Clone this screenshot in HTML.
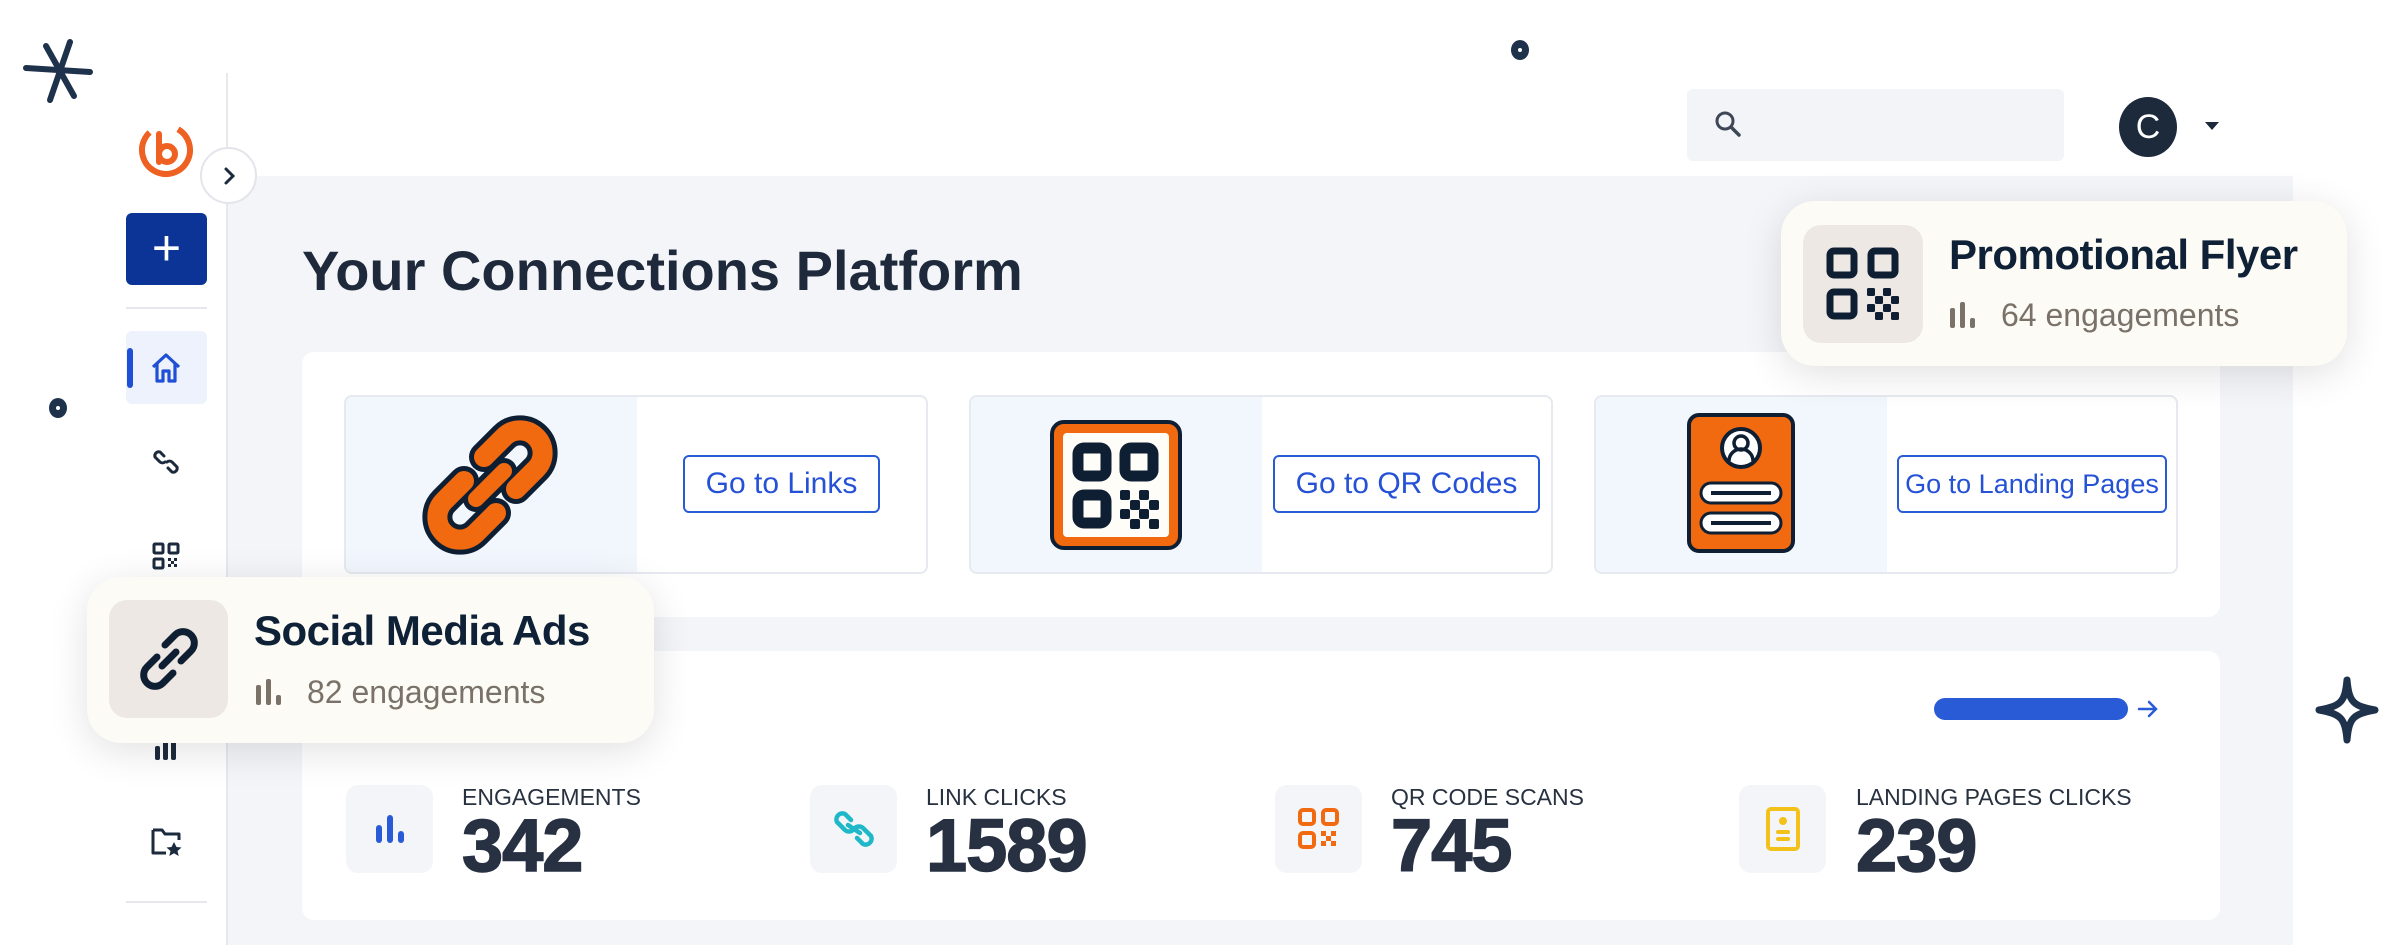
<!DOCTYPE html>
<html><head><meta charset="utf-8"><style>
*{margin:0;padding:0;box-sizing:border-box}
body{width:2401px;height:945px;overflow:hidden;background:#fff;font-family:"Liberation Sans",sans-serif;position:relative;color:#1b2a3d}
.abs{position:absolute}
.panel{left:227px;top:176px;width:2066px;height:769px;background:#f4f5f8}
.card{background:#fff;border-radius:12px}
.ic{border:2px solid #e6e9ef;border-radius:8px;background:#fff;overflow:hidden}
.ic .l{position:absolute;left:0;top:0;bottom:0;width:291px;background:#f2f7fe}
.btn{border:2px solid #2a5bd7;border-radius:6px;color:#2451d6;font-size:30px;display:flex;align-items:center;justify-content:center;height:58px;background:#fff}
.sbox{width:87px;height:88px;border-radius:12px;background:#f4f5f8;display:flex;align-items:center;justify-content:center}
.lab{font-size:23px;color:#27313f}
.num{font-size:74px;font-weight:bold;color:#273142;letter-spacing:-1px;-webkit-text-stroke:1.5px #273142}
.pop{background:#fcfbf5;border-radius:34px;box-shadow:0 8px 40px rgba(0,0,0,.12)}
.pbox{background:#ede8e3;border-radius:18px;display:flex;align-items:center;justify-content:center}
.pt{font-size:42px;font-weight:bold;color:#0f2137;letter-spacing:-0.5px}
.ps{font-size:32px;color:#7a7268}
</style></head><body>
<div class="abs panel"></div>
<!-- decorations -->
<svg class="abs" style="left:22px;top:36px" width="72" height="70" viewBox="0 0 72 70"><g stroke="#1e324b" stroke-width="6" stroke-linecap="round"><line x1="4" y1="32" x2="68" y2="36"/><line x1="48" y1="6" x2="28" y2="64"/><line x1="24" y1="10" x2="52" y2="60"/></g></svg>
<div class="abs" style="left:49px;top:398px;width:18px;height:20px;border-radius:50%;background:#1e324b"><div style="position:absolute;left:7px;top:8px;width:4px;height:4px;background:#fff;border-radius:50%"></div></div>
<div class="abs" style="left:1511px;top:40px;width:18px;height:20px;border-radius:50%;background:#1e324b"><div style="position:absolute;left:7px;top:8px;width:4px;height:4px;background:#fff;border-radius:50%"></div></div>
<svg class="abs" style="left:2315px;top:676px" width="64" height="68" viewBox="0 0 64 68"><path d="M32 4 C34 26 38 30 60 34 C38 38 34 42 32 64 C30 42 26 38 4 34 C26 30 30 26 32 4Z" fill="none" stroke="#1e324b" stroke-width="7" stroke-linejoin="round"/></svg>

<!-- sidebar -->
<div class="abs" style="left:226px;top:73px;width:2px;height:872px;background:#e6e8ec"></div>
<svg class="abs" style="left:137px;top:120px" width="58" height="58" viewBox="0 0 58 58"><circle cx="29" cy="30" r="24" fill="none" stroke="#ee6123" stroke-width="6" stroke-dasharray="120 40" transform="rotate(-60 29 30)"/><path d="M22 14 L22 42 M22 34 a8 8 0 1 1 16 0 a8 8 0 0 1 -16 0" fill="none" stroke="#ee6123" stroke-width="6" stroke-linecap="round"/></svg>
<div class="abs" style="left:200px;top:147px;width:57px;height:57px;border-radius:50%;background:#fff;border:2px solid #e3e5ea"></div>
<svg class="abs" style="left:216px;top:163px" width="26" height="26" viewBox="0 0 26 26"><path d="M10 6 L17 13 L10 20" fill="none" stroke="#1b2a3d" stroke-width="3" stroke-linecap="round"/></svg>
<div class="abs" style="left:126px;top:213px;width:81px;height:72px;background:#0b3496;border-radius:6px;color:#fff;font-size:50px;line-height:70px;text-align:center">+</div>
<div class="abs" style="left:126px;top:307px;width:81px;height:2px;background:#e6e8ec"></div>
<div class="abs" style="left:126px;top:331px;width:81px;height:73px;background:#edf2fd;border-radius:6px"></div>
<div class="abs" style="left:127px;top:348px;width:6px;height:40px;background:#1f4fd6;border-radius:3px"></div>
<svg class="abs" style="left:148px;top:350px" width="36" height="36" viewBox="0 0 36 36"><path d="M5 17 L18 5 L31 17 M9 14 V31 H15 V21 H21 V31 H27 V14" fill="none" stroke="#1f4fd6" stroke-width="3.2" stroke-linejoin="round"/></svg>
<svg class="abs" style="left:151px;top:447px" width="30" height="30" viewBox="0 0 30 30"><g fill="none" stroke="#1b2a3d" stroke-width="3" stroke-linecap="round"><path d="M13 9 L9 5 a4 4 0 0 0 -5 5 l5 5 a4 4 0 0 0 5 0"/><path d="M17 21 L21 25 a4 4 0 0 0 5 -5 l-5 -5 a4 4 0 0 0 -5 0"/></g></svg>
<svg class="abs" style="left:151px;top:541px" width="30" height="30" viewBox="0 0 30 30"><g fill="none" stroke="#1b2a3d" stroke-width="3"><rect x="3" y="3" width="9" height="9" rx="1"/><rect x="18" y="3" width="9" height="9" rx="1"/><rect x="3" y="18" width="9" height="9" rx="1"/></g><g fill="#1b2a3d"><rect x="17" y="17" width="3" height="3"/><rect x="23" y="17" width="3" height="3"/><rect x="20" y="20" width="3" height="3"/><rect x="17" y="23" width="3" height="3"/><rect x="23" y="23" width="3" height="3"/></g></svg>
<svg class="abs" style="left:153px;top:738px" width="28" height="24" viewBox="0 0 28 24"><g fill="#1b2a3d"><rect x="2" y="8" width="5" height="14" rx="2"/><rect x="10" y="3" width="5" height="19" rx="2"/><rect x="18" y="3" width="5" height="19" rx="2"/></g></svg>
<svg class="abs" style="left:150px;top:826px" width="34" height="32" viewBox="0 0 34 32"><path d="M3 4 H12 L15 8 H29 V14 M16 27 H3 V4" fill="none" stroke="#1b2a3d" stroke-width="3" stroke-linejoin="round"/><path d="M24 16 l2.5 5 5 .5 -4 3.5 1.2 5 -4.7 -2.7 -4.7 2.7 1.2 -5 -4 -3.5 5 -.5z" fill="#1b2a3d"/></svg>
<div class="abs" style="left:126px;top:901px;width:81px;height:2px;background:#e6e8ec"></div>

<!-- header -->
<div class="abs" style="left:1687px;top:89px;width:377px;height:72px;background:#f3f4f7;border-radius:6px"></div>
<svg class="abs" style="left:1712px;top:108px" width="32" height="32" viewBox="0 0 32 32"><circle cx="13" cy="13" r="8" fill="none" stroke="#3d4756" stroke-width="3"/><line x1="19" y1="19" x2="27" y2="27" stroke="#3d4756" stroke-width="3.5" stroke-linecap="round"/></svg>
<div class="abs" style="left:2119px;top:97px;width:58px;height:60px;border-radius:50%;background:#1c2a3c;color:#fff;font-size:34px;text-align:center;line-height:60px">C</div>
<svg class="abs" style="left:2204px;top:120px" width="16" height="12"><path d="M1 2 H15 L8 10Z" fill="#1c2a3c"/></svg>

<div class="abs" style="left:302px;top:238px;font-size:56px;font-weight:bold;color:#1e2a3b;letter-spacing:0px">Your Connections Platform</div>

<div class="abs card" style="left:302px;top:352px;width:1918px;height:265px"></div>
<div class="abs ic" style="left:344px;top:395px;width:584px;height:179px"><div class="l"></div></div>
<div class="abs ic" style="left:969px;top:395px;width:584px;height:179px"><div class="l"></div></div>
<div class="abs ic" style="left:1594px;top:395px;width:584px;height:179px"><div class="l"></div></div>
<svg class="abs" style="left:420px;top:415px" width="140" height="140" viewBox="0 0 140 140"><g fill="none" stroke-linecap="round"><path d="M64 42 L84 22 a22 22 0 0 1 32 32 L96 74" stroke="#0f1f33" stroke-width="30"/><path d="M76 98 L56 118 a22 22 0 0 1 -32 -32 L44 66" stroke="#0f1f33" stroke-width="30"/><path d="M56 84 L84 56" stroke="#0f1f33" stroke-width="26"/><path d="M64 42 L84 22 a22 22 0 0 1 32 32 L96 74" stroke="#f26a10" stroke-width="20"/><path d="M76 98 L56 118 a22 22 0 0 1 -32 -32 L44 66" stroke="#f26a10" stroke-width="20"/><path d="M56 84 L84 56" stroke="#f26a10" stroke-width="16"/></g></svg>
<svg class="abs" style="left:1050px;top:420px" width="132" height="130" viewBox="0 0 132 130"><rect x="2" y="2" width="128" height="126" rx="12" fill="#f26a10" stroke="#0f1f33" stroke-width="4"/><rect x="13" y="13" width="106" height="104" rx="4" fill="#fffdf8"/><g fill="none" stroke="#0f1f33" stroke-width="11"><rect x="28" y="28" width="28" height="28" rx="6"/><rect x="75" y="28" width="28" height="28" rx="6"/><rect x="28" y="75" width="28" height="28" rx="6"/></g><g fill="#0f1f33"><rect x="70" y="70" width="10" height="10" rx="2"/><rect x="89" y="70" width="10" height="10" rx="2"/><rect x="80" y="80" width="10" height="10" rx="2"/><rect x="99" y="80" width="10" height="10" rx="2"/><rect x="70" y="89" width="10" height="10" rx="2"/><rect x="89" y="89" width="10" height="10" rx="2"/><rect x="80" y="99" width="10" height="10" rx="2"/><rect x="99" y="99" width="10" height="10" rx="2"/></g></svg>
<svg class="abs" style="left:1687px;top:413px" width="108" height="140" viewBox="0 0 108 140"><rect x="2" y="2" width="104" height="136" rx="10" fill="#f26a10" stroke="#0f1f33" stroke-width="4"/><circle cx="54" cy="35" r="19" fill="#fff" stroke="#0f1f33" stroke-width="4"/><circle cx="54" cy="30" r="7" fill="none" stroke="#0f1f33" stroke-width="3.5"/><path d="M42 48 a12 12 0 0 1 24 0" fill="none" stroke="#0f1f33" stroke-width="3.5"/><rect x="14" y="70" width="80" height="20" rx="10" fill="#fff" stroke="#0f1f33" stroke-width="3"/><line x1="24" y1="80" x2="84" y2="80" stroke="#0f1f33" stroke-width="4"/><rect x="14" y="100" width="80" height="20" rx="10" fill="#fff" stroke="#0f1f33" stroke-width="3"/><line x1="24" y1="110" x2="84" y2="110" stroke="#0f1f33" stroke-width="4"/></svg>
<div class="abs btn" style="left:683px;top:455px;width:197px">Go to Links</div>
<div class="abs btn" style="left:1273px;top:455px;width:267px">Go to QR Codes</div>
<div class="abs btn" style="left:1897px;top:455px;width:270px;font-size:27px">Go to Landing Pages</div>

<div class="abs card" style="left:302px;top:651px;width:1918px;height:269px"></div>
<div class="abs" style="left:1934px;top:698px;width:194px;height:22px;background:#2a5bd7;border-radius:11px"></div>
<svg class="abs" style="left:2136px;top:697px" width="24" height="24" viewBox="0 0 24 24"><path d="M3 12 H20 M13 5 L20 12 L13 19" fill="none" stroke="#2a5bd7" stroke-width="2.5" stroke-linecap="round"/></svg>

<div class="abs sbox" style="left:346px;top:785px"><svg width="36" height="36" viewBox="0 0 36 36"><g fill="#2a5bd7"><rect x="4" y="14" width="6" height="18" rx="3"/><rect x="15" y="4" width="6" height="28" rx="3"/><rect x="26" y="20" width="6" height="12" rx="3"/></g></svg></div>
<div class="abs lab" style="left:462px;top:784px">ENGAGEMENTS</div>
<div class="abs num" style="left:462px;top:803px">342</div>
<div class="abs sbox" style="left:810px;top:785px"><svg width="46" height="46" viewBox="0 0 46 46"><g fill="none" stroke="#1fb8c8" stroke-width="4.5" stroke-linecap="round"><path d="M20 14 L14 8 a6 6 0 0 0 -8 8 l8 8 a6 6 0 0 0 8 0"/><path d="M26 32 L32 38 a6 6 0 0 0 8 -8 l-8 -8 a6 6 0 0 0 -8 0"/><path d="M17 19 L29 27"/></g></svg></div>
<div class="abs lab" style="left:926px;top:784px">LINK CLICKS</div>
<div class="abs num" style="left:926px;top:803px">1589</div>
<div class="abs sbox" style="left:1275px;top:785px"><svg width="46" height="46" viewBox="0 0 46 46"><g fill="none" stroke="#f26a10" stroke-width="4"><rect x="4" y="4" width="14" height="14" rx="3"/><rect x="27" y="4" width="14" height="14" rx="3"/><rect x="4" y="27" width="14" height="14" rx="3"/></g><g fill="#f26a10"><rect x="25" y="25" width="5" height="5"/><rect x="35" y="25" width="5" height="5"/><rect x="30" y="30" width="5" height="5"/><rect x="25" y="35" width="5" height="5"/><rect x="35" y="35" width="5" height="5"/></g></svg></div>
<div class="abs lab" style="left:1391px;top:784px">QR CODE SCANS</div>
<div class="abs num" style="left:1391px;top:803px">745</div>
<div class="abs sbox" style="left:1739px;top:785px"><svg width="40" height="46" viewBox="0 0 40 46"><rect x="5" y="3" width="30" height="40" rx="3" fill="none" stroke="#f2c21b" stroke-width="4"/><circle cx="20" cy="15" r="4" fill="#f2c21b"/><rect x="13" y="24" width="14" height="4" rx="2" fill="#f2c21b"/><rect x="13" y="31" width="14" height="4" rx="2" fill="#f2c21b"/></svg></div>
<div class="abs lab" style="left:1856px;top:784px">LANDING PAGES CLICKS</div>
<div class="abs num" style="left:1856px;top:803px">239</div>

<!-- popups -->
<div class="abs pop" style="left:87px;top:577px;width:567px;height:166px"></div>
<div class="abs pbox" style="left:109px;top:600px;width:119px;height:118px"><svg width="72" height="72" viewBox="0 0 72 72"><g fill="none" stroke="#0f1f33" stroke-width="7" stroke-linecap="round"><path d="M32 22 L42 12 a11 11 0 0 1 16 16 L48 38"/><path d="M40 50 L30 60 a11 11 0 0 1 -16 -16 L24 34"/><path d="M29 43 L43 29"/></g></svg></div>
<div class="abs pt" style="left:254px;top:607px">Social Media Ads</div>
<svg class="abs" style="left:254px;top:677px" width="30" height="30" viewBox="0 0 30 30"><g fill="#7a7268"><rect x="2" y="8" width="5" height="20" rx="2"/><rect x="12" y="2" width="5" height="26" rx="2"/><rect x="22" y="18" width="5" height="10" rx="2"/></g></svg>
<div class="abs ps" style="left:307px;top:674px">82 engagements</div>

<div class="abs pop" style="left:1781px;top:201px;width:566px;height:165px"></div>
<div class="abs pbox" style="left:1803px;top:225px;width:120px;height:118px"><svg width="76" height="76" viewBox="0 0 76 76"><g fill="none" stroke="#0f1f33" stroke-width="7"><rect x="5" y="5" width="24" height="24" rx="4"/><rect x="46" y="5" width="24" height="24" rx="4"/><rect x="5" y="46" width="24" height="24" rx="4"/></g><g fill="#0f1f33"><rect x="42" y="42" width="8" height="8" rx="1.5"/><rect x="58" y="42" width="8" height="8" rx="1.5"/><rect x="50" y="50" width="8" height="8" rx="1.5"/><rect x="66" y="50" width="8" height="8" rx="1.5"/><rect x="42" y="58" width="8" height="8" rx="1.5"/><rect x="58" y="58" width="8" height="8" rx="1.5"/><rect x="50" y="66" width="8" height="8" rx="1.5"/><rect x="66" y="66" width="8" height="8" rx="1.5"/></g></svg></div>
<div class="abs pt" style="left:1949px;top:231px">Promotional Flyer</div>
<svg class="abs" style="left:1948px;top:300px" width="30" height="30" viewBox="0 0 30 30"><g fill="#7a7268"><rect x="2" y="8" width="5" height="20" rx="2"/><rect x="12" y="2" width="5" height="26" rx="2"/><rect x="22" y="18" width="5" height="10" rx="2"/></g></svg>
<div class="abs ps" style="left:2001px;top:297px">64 engagements</div>
</body></html>
